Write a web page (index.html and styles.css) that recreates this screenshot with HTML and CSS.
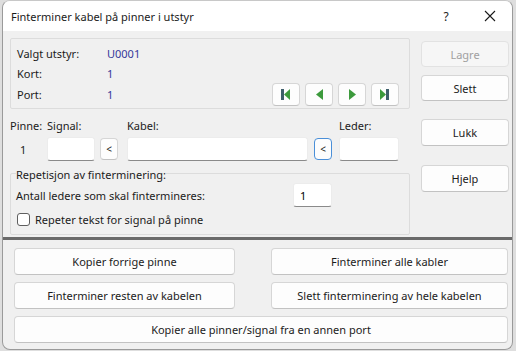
FILE: index.html
```html
<!DOCTYPE html>
<html lang="no">
<head>
<meta charset="utf-8">
<title>Finterminer kabel på pinner i utstyr</title>
<link rel="stylesheet" href="styles.css">
</head>
<body>
<div class="window">
  <div class="titlebar">
    <span class="title">Finterminer kabel på pinner i utstyr</span>
    <span class="help">?</span>
    <span class="close">
      <svg width="12" height="12" viewBox="0 0 12 12"><path d="M1 1 L11 11 M11 1 L1 11" stroke="#1a1a1a" stroke-width="1.1" fill="none"/></svg>
    </span>
  </div>
  <div class="main">
    <div class="left">
      <div class="group info">
        <div class="infogrid">
          <span class="lbl">Valgt utstyr:</span><span class="val">U0001</span>
          <span class="lbl">Kort:</span><span class="val">1</span>
          <span class="lbl">Port:</span><span class="val">1</span>
        </div>
        <div class="nav">
          <button class="btn navbtn"><svg width="10" height="11" viewBox="0 0 10 11"><rect x="0" y="0" width="3" height="11" fill="#3f5f6b"/><path d="M9 0 L3 5.5 L9 11 Z" fill="#3c9a3c"/></svg></button>
          <button class="btn navbtn"><svg width="7" height="11" viewBox="0 0 7 11"><path d="M7 0 L0 5.5 L7 11 Z" fill="#3c9a3c"/></svg></button>
          <button class="btn navbtn"><svg width="7" height="11" viewBox="0 0 7 11"><path d="M0 0 L7 5.5 L0 11 Z" fill="#3c9a3c"/></svg></button>
          <button class="btn navbtn"><svg width="10" height="11" viewBox="0 0 10 11"><path d="M0 0 L6 5.5 L0 11 Z" fill="#3c9a3c"/><rect x="6" y="0" width="3" height="11" fill="#3f5f6b"/></svg></button>
        </div>
      </div>
      <div class="pinrow">
        <span class="lbl">Pinne:</span>
        <span class="lbl">Signal:</span>
        <span></span>
        <span class="lbl">Kabel:</span>
        <span></span>
        <span class="lbl">Leder:</span>
        <span class="pinno">1</span>
        <input class="field w-signal" type="text">
        <button class="btn small">&lt;</button>
        <input class="field w-kabel" type="text">
        <button class="btn small focus">&lt;</button>
        <input class="field w-leder" type="text">
      </div>
      <fieldset class="group rep">
        <legend>Repetisjon av finterminering:</legend>
        <div class="antall">
          <span class="lbl">Antall ledere som skal fintermineres:</span>
          <input class="field w-antall" type="text" value="1">
        </div>
        <label class="check"><span class="box"></span>Repeter tekst for signal på pinne</label>
      </fieldset>
    </div>
    <div class="right">
      <button class="btn side disabled">Lagre</button>
      <button class="btn side b-slett">Slett</button>
      <button class="btn side b-lukk">Lukk</button>
      <button class="btn side b-hjelp">Hjelp</button>
    </div>
  </div>
  <div class="separator"></div>
  <div class="bottom">
    <button class="btn wide">Kopier forrige pinne</button>
    <button class="btn wide">Finterminer alle kabler</button>
    <button class="btn wide">Finterminer resten av kabelen</button>
    <button class="btn wide">Slett finterminering av hele kabelen</button>
    <button class="btn wide full">Kopier alle pinner/signal fra en annen port</button>
  </div>
</div>
</body>
</html>
```
FILE: styles.css
```css
* { box-sizing: border-box; }
html, body { margin: 0; padding: 0; }
body {
  background: #dedede;
  font-family: "Noto Sans", "Open Sans", sans-serif;
  font-size: 11px;
  color: #1b1b1b;
  width: 516px;
  height: 351px;
  overflow: hidden;
}
.window {
  margin-left: 2px;
  width: 511px;
  height: 350px;
  background: #f0f0f0;
  border: 1px solid #9a9a9a;
  border-top-color: #c8c8c8;
  border-radius: 8px;
  overflow: hidden;
  display: flex;
  flex-direction: column;
}
.titlebar {
  height: 30px;
  background: #ffffff;
  display: flex;
  align-items: center;
  padding-left: 8px;
  flex: none;
}
.title { flex: 1; font-size: 11px; color: #1a1a1a; }
.help { width: 20px; text-align: center; margin-right: 26px; font-size: 12px; }
.close { width: 16px; display: flex; justify-content: center; margin-right: 14px; }
.main {
  display: flex;
  height: 206px;
  flex: none;
}
.left {
  width: 400px;
  margin-left: 7px;
  padding-top: 7px;
  display: flex;
  flex-direction: column;
}
.right {
  width: 88px;
  margin-left: 11px;
  padding-top: 10px;
  display: flex;
  flex-direction: column;
}
.group {
  border: 1px solid #dcdcdc;
  border-radius: 2px;
  margin: 0;
}
.info {
  height: 71px;
  display: flex;
  justify-content: space-between;
  align-items: flex-end;
  padding: 4px 10px 2px 6px;
}
.infogrid {
  align-self: flex-start;
  display: grid;
  grid-template-columns: 90px auto;
  grid-auto-rows: 20.5px;
  align-items: center;
}
.val { color: #34389a; }
.nav { display: flex; gap: 5px; }
.btn {
  font-family: inherit;
  font-size: 11px;
  color: #1b1b1b;
  background: #fdfdfd;
  border: 1px solid #d6d6d6;
  border-bottom-color: #c2c2c2;
  border-radius: 4px;
  padding: 0;
  display: flex;
  align-items: center;
  justify-content: center;
}
.navbtn { width: 28px; height: 23px; }
.pinrow {
  margin-top: 9px;
  display: grid;
  grid-template-columns: 37px 53px 27px 187px 25px 60px;
  grid-template-rows: 16px 24px;
  row-gap: 3px;
  align-items: center;
}
.pinrow .lbl { line-height: 16px; }
.pinno { padding-left: 10px; }
.field {
  font-family: inherit;
  font-size: 11px;
  height: 24px;
  background: #ffffff;
  border: 1px solid #ececec;
  border-bottom: 1px solid #8a8a8a;
  border-radius: 3px;
  padding: 0 6px;
  outline: none;
}
.w-signal { width: 48px; }
.w-kabel { width: 181px; }
.w-leder { width: 60px; }
.w-antall { width: 39px; }
.small { width: 18px; height: 22px; font-size: 10px; }
.small.focus { border: 1px solid #4a8fd8; }
.rep {
  margin-top: 3px;
  height: 71px;
  padding: 0 5px;
}
.rep legend {
  padding: 4px 0 0 0;
  margin-left: 0;
  line-height: 14px;
}
.antall {
  display: flex;
  align-items: center;
  justify-content: space-between;
  width: 316px;
  height: 24px;
  margin-top: 1px;
}
.check {
  display: flex;
  align-items: center;
  height: 16px;
  margin-top: 4px;
  margin-left: 1px;
  gap: 5px;
}
.box {
  width: 13px;
  height: 13px;
  background: #ffffff;
  border: 1px solid #5f5f5f;
  border-radius: 3px;
}
.side { width: 88px; height: 26px; }
.disabled { color: #a0a0a0; background: #f6f6f6; border-color: #e2e2e2; }
.b-slett { margin-top: 8px; }
.b-lukk { margin-top: 18px; height: 27px; }
.b-hjelp { margin-top: 19px; height: 27px; }
.separator {
  height: 3px;
  background: #6a6a6a;
  flex: none;
}
.bottom {
  padding: 8px 4px 0 11px;
  display: grid;
  grid-template-columns: 221px 237px;
  column-gap: 36px;
  row-gap: 7px;
  grid-auto-rows: 27px;
}
.wide { height: 27px; }
.full { grid-column: 1 / 3; }
```
